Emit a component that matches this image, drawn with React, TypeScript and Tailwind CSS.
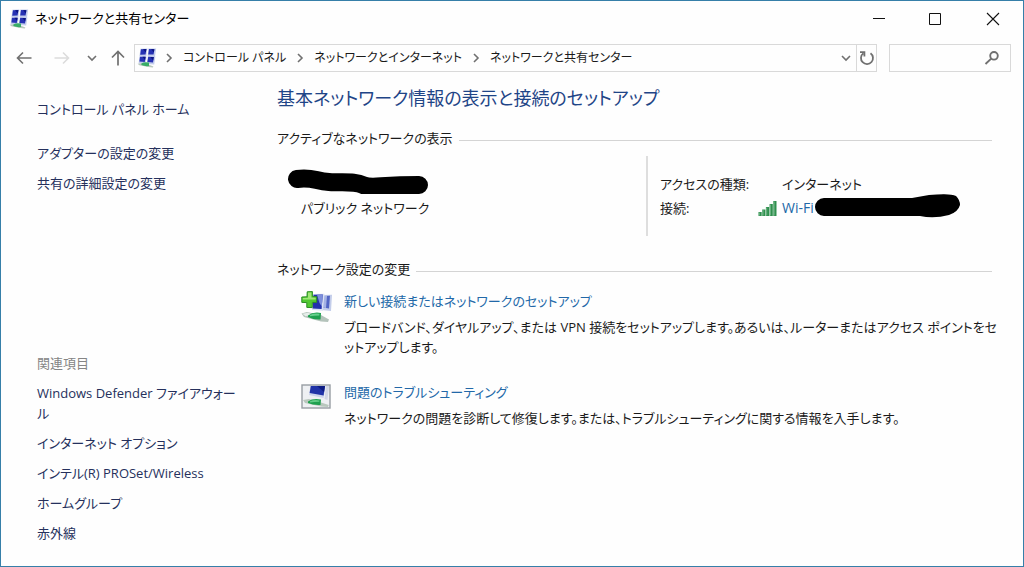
import type { ReactNode } from 'react'

const CRUMBS = ['コントロール パネル', 'ネットワークとインターネット', 'ネットワークと共有センター']

function NetworkIcon() {
  return (
    <svg className="h-5 w-5 shrink-0" viewBox="0 0 20 20" aria-hidden="true">
      <path d="M3.4 .8 10.4 .5 9.4 8 2.4 8.4Z M11.4 .6 19.2 .6 18 8.4 10.6 8.2Z M2.4 8.8 9.6 8.6 8.6 16 1.6 15.4Z M10.8 8.6 18.4 8.6 17.2 16.6 9.8 16Z" fill="#c3cdec" />
      <path d="M4 1.2 9.4 1 8.6 6.4 3.2 6.8Z M12 1 17.4 1.2 16.6 6.6 11.2 6.4Z M3 8.8 8.6 8.8 7.8 14 2.4 13.6Z M11.2 8.8 16.8 9 16 14.4 10.4 14Z" fill="#2632b4" />
      <path d="M6 1.2 9.4 1 8.8 4.4Z M14 1 17.4 1.2 16.8 4.6Z M5.4 8.8 8.6 8.8 8.1 12Z M13.4 9 16.8 9 16.2 12.4Z" fill="#0b1480" />
      <path d="M.6 15.8 5 15.2 12 16.8 16.4 18.4 15.8 19.6 11.4 19 2.4 17.2Z" fill="#b8c8bc" />
      <path d="M4.4 15.4Q7 13.6 12 14.4L12 18Q8 18.6 4.4 17Z" fill="#39ad67" />
    </svg>
  )
}

function NewConnectionIcon() {
  return (
    <svg className="h-8 w-8 shrink-0" viewBox="0 0 32 32" aria-hidden="true">
      <path d="M21 4 31 3.8 30 20 20 19Z" fill="#c3cdea" />
      <path d="M23 5 29 4.8 28 17.4 22 16.6Z" fill="#5366c4" />
      <path d="M23 5 26 4.9 25 17 22 16.6Z" fill="#a5b3e4" />
      <path d="M12 3 23.5 2.8 22 19.8 11 19Z" fill="#dbe2f4" />
      <path d="M12.5 3.8 21.8 3.6 20.6 18 11.6 17.4Z" fill="#2231ac" />
      <path d="M16 3.8 21.8 3.6 20.8 15.5 18.5 12Z" fill="#7d8fdb" />
      <path d="M.5 22.5 6 21 20 24 28 28.5 27 31 20 30.5 3 26Z" fill="#b4c3bb" />
      <path d="M1.5 22.8 7 21.8 11 23.6 4.5 25.2Z" fill="#e6eeea" />
      <path d="M7 24.5Q12 20.5 20 22L19.5 28.5Q13 29 7 26Z" fill="#1fa04f" />
      <path d="M9 24Q13 22 18.5 22.8L18.3 24.6Q13 24.8 9 25.2Z" fill="#66cf8c" />
      <path d="M6.2 .8 11.4 .6 11.4 5.6 15.8 5.8 15.6 11.4 11.4 11.4 11.2 16.6 5.8 16.4 5.8 11.6 .8 11.4 .8 6 6 5.8Z" fill="#51c832" stroke="#2b8c24" />
      <path d="M7 1.6 10.4 1.6 10.4 6.6 14.8 6.8 14.6 8.6 1.8 8.6 1.8 7 7 6.8Z" fill="#9fe676" />
    </svg>
  )
}

function TroubleshootIcon() {
  return (
    <svg className="h-8 w-8 shrink-0" viewBox="0 0 32 32" aria-hidden="true">
      <rect x="1" y="3" width="28" height="23" fill="#eef0f3" stroke="#989da3" strokeWidth="1.4" />
      <path d="M9.5 4 24.5 4 22.5 16 8 13Z" fill="#cbd3ec" />
      <path d="M9.8 4 24 4 22.6 13.6 8.6 11Z" fill="#2033a7" />
      <path d="M16 4 24 4 23 10Z" fill="#0d1c83" />
      <path d="M25 4 28 4 26.5 18 23.5 17Z" fill="#d3d8e6" />
      <path d="M2 18 8 17 20 20.5 27.8 23 27 25 20 24.4 4 21Z" fill="#b8c7bd" />
      <path d="M7 19.5Q12 16 20 17.6L19.5 23Q12 23.4 7 21Z" fill="#1fa04f" />
      <path d="M9 19.2Q13 17.4 18.5 18.4L18.3 19.8Q13 20 9 20.4Z" fill="#62cc87" />
    </svg>
  )
}

function SignalIcon() {
  return (
    <svg className="h-4 w-5 shrink-0" viewBox="0 0 20 16" aria-hidden="true">
      <path d="M.5 12h3.2v4H.5z M4.2 9.5h3.2V16H4.2z M7.9 7h3.2v9H7.9z M11.6 4h3.2v12h-3.2z M15.3 1h3.2v15h-3.2z" fill="#2f8f4e" />
      <path d="M1.3 12.5v3 M5 10v5.5 M8.7 7.5v8 M12.4 4.5v11 M16.1 1.5v14" stroke="#8cc79d" strokeWidth="0.7" />
    </svg>
  )
}

function Chevron({ down = false }: { down?: boolean }) {
  return (
    <svg className="h-3 w-3 shrink-0" viewBox="0 0 12 12" fill="none" stroke="#707070" strokeWidth="1.6" aria-hidden="true">
      <path d={down ? 'M2 4l4 4 4-4' : 'M4 2l4 4-4 4'} />
    </svg>
  )
}

function TitleBar() {
  return (
    <header className="flex h-9 items-center pl-2">
      <NetworkIcon />
      <h1 className="ml-1.5 flex-1 text-[13px] text-black">ネットワークと共有センター</h1>
      <button aria-label="最小化" className="flex h-9 w-14 items-center justify-center">
        <svg className="h-3.5 w-3.5" viewBox="0 0 14 14" stroke="#111"><path d="M1 6.5h12" /></svg>
      </button>
      <button aria-label="最大化" className="flex h-9 w-14 items-center justify-center">
        <svg className="h-3.5 w-3.5" viewBox="0 0 14 14" fill="none" stroke="#111"><path d="M1.5 1.5h11v11h-11z" /></svg>
      </button>
      <button aria-label="閉じる" className="flex h-9 w-[60px] items-center justify-center">
        <svg className="h-3.5 w-3.5" viewBox="0 0 14 14" stroke="#111" strokeWidth="1.1"><path d="M1 1l12 12M13 1L1 13" /></svg>
      </button>
    </header>
  )
}

function AddressBar() {
  return (
    <div className="flex items-center pt-[7px] pr-3 pl-[15px]">
      <button aria-label="戻る">
        <svg className="h-4 w-4" viewBox="0 0 16 16" fill="none" stroke="#707070" strokeWidth="1.6"><path d="M15.5 8H1.5M7 2.5L1.5 8 7 13.5" /></svg>
      </button>
      <button aria-label="進む" className="ml-[22px]" disabled>
        <svg className="h-4 w-4" viewBox="0 0 16 16" fill="none" stroke="#dcdcdc" strokeWidth="1.6"><path d="M.5 8h14M9 2.5L14.5 8 9 13.5" /></svg>
      </button>
      <button aria-label="最近表示した場所" className="ml-4"><Chevron down /></button>
      <button aria-label="上へ" className="ml-3">
        <svg className="h-4 w-4" viewBox="0 0 16 16" fill="none" stroke="#707070" strokeWidth="1.7"><path d="M8 15.5V1.5M2 7.5L8 1.5l6 6" /></svg>
      </button>
      <nav aria-label="アドレス" className="ml-2 flex h-7 min-w-0 flex-1 items-center border border-[#d9d9d9] pl-0.5">
        <NetworkIcon />
        <ol className="flex flex-1 items-center">
          {CRUMBS.map(c => (
            <li key={c} className="flex items-center">
              <span className="mx-1.5 flex"><Chevron /></span>
              <a href="#" className="px-0.5 text-xs whitespace-nowrap text-[#1a1a1a]">{c}</a>
            </li>
          ))}
        </ol>
        <button aria-label="以前の場所" className="px-1"><Chevron down /></button>
        <button aria-label="最新の情報に更新" className="flex h-full w-5 items-center justify-center border-l border-[#d9d9d9]">
          <svg className="h-4 w-4" viewBox="0 0 16 16" fill="none" stroke="#707070" strokeWidth="1.8"><path d="M11.5 3.2A6 6 0 1 1 4.2 3.4M1 2.2h4.4v4.4" /></svg>
        </button>
      </nav>
      <div className="ml-3 flex h-7 w-[122px] items-center border border-[#d9d9d9] pr-2.5">
        <input type="search" aria-label="検索" className="h-full min-w-0 flex-1 bg-transparent px-2 text-[13px] outline-none" />
        <svg className="h-4 w-4 shrink-0" viewBox="0 0 16 16" fill="none" stroke="#707070" strokeWidth="1.9" aria-hidden="true">
          <circle cx="10" cy="5.8" r="3.8" /><path d="M7.2 8.6L1.5 14" />
        </svg>
      </div>
    </div>
  )
}

function Sidebar() {
  return (
    <aside className="w-[240px] shrink-0 pt-[27px] pl-9 text-[13px] leading-5 text-[#25305c]">
      <a href="#" className="block">コントロール パネル ホーム</a>
      <ul className="mt-6 space-y-2.5">
        <li><a href="#">アダプターの設定の変更</a></li>
        <li><a href="#">共有の詳細設定の変更</a></li>
      </ul>
      <h2 className="mt-40 text-[#858585]">関連項目</h2>
      <ul className="mt-2.5 space-y-2.5 whitespace-nowrap">
        <li><a href="#">Windows Defender ファイアウォー<br />ル</a></li>
        <li><a href="#">インターネット オプション</a></li>
        <li><a href="#">インテル(R) PROSet/Wireless</a></li>
        <li><a href="#">ホームグループ</a></li>
        <li><a href="#">赤外線</a></li>
      </ul>
    </aside>
  )
}

function SectionTitle({ children }: { children: ReactNode }) {
  return (
    <div className="flex items-center gap-1.5">
      <h3>{children}</h3>
      <span className="mt-1 h-px flex-1 bg-[#d4d4d4]" />
    </div>
  )
}

function Task({ icon, title, children }: { icon: ReactNode; title: string; children: ReactNode }) {
  return (
    <li className="flex gap-[11px]">
      {icon}
      <div className="min-w-0 flex-1">
        <a href="#" className="block text-[#2268a8]">{title}</a>
        <p className="mt-1.5 whitespace-nowrap">{children}</p>
      </div>
    </li>
  )
}

function ActiveNetwork() {
  return (
    <div className="mt-2 flex h-20">
      <div className="flex-1 pt-3 pl-[10px]">
        <svg className="h-[26px] w-[142px]" viewBox="0 0 142 26" role="img" aria-label="ネットワーク名">
          <path d="M10 11C26 9 28 13 42 14S68 13 76 17 90 17 132 17" fill="none" stroke="#000" strokeWidth="18" strokeLinecap="round" strokeLinejoin="round" />
        </svg>
        <p className="mt-1 pl-3.5">パブリック ネットワーク</p>
      </div>
      <div className="w-[346px] border-l-2 border-[#dedede] pt-[18px] pl-3">
        <dl className="grid grid-cols-[122px_1fr] gap-y-1">
          <dt>アクセスの種類:</dt>
          <dd>インターネット</dd>
          <dt>接続:</dt>
          <dd className="relative -ml-6 flex items-center gap-1">
            <SignalIcon />
            <a href="#" className="text-sm leading-5 text-[#2268a8]">Wi-Fi</a>
            <svg className="absolute -top-1.5 left-14 h-7 w-[150px]" viewBox="0 0 150 28" aria-hidden="true">
              <path d="M10 15H108Q122 11 136 12" fill="none" stroke="#000" strokeWidth="18" strokeLinecap="round" />
              <path d="M98 6 115 3Q136 1 142 4 146 8 146 13 144 20 135 23 120 27 106 24Z" />
            </svg>
          </dd>
        </dl>
      </div>
    </div>
  )
}

export default function App() {
  return (
    <div lang="ja" className="flex min-h-screen flex-col border border-[#367fa9] bg-[#fefefe] font-['Open_Sans','Noto_Sans_CJK_JP',sans-serif] [font-feature-settings:'palt']">
      <TitleBar />
      <AddressBar />
      <div className="flex flex-1">
        <Sidebar />
        <main className="min-w-0 flex-1 pt-3 pr-[31px] pl-9 text-[13px] leading-5 text-[#1a1a1a]">
          <h2 className="text-lg leading-7 text-[#1f4587]">基本ネットワーク情報の表示と接続のセットアップ</h2>
          <section className="mt-4">
            <SectionTitle>アクティブなネットワークの表示</SectionTitle>
            <ActiveNetwork />
          </section>
          <section className="mt-[23px]">
            <SectionTitle>ネットワーク設定の変更</SectionTitle>
            <ul className="mt-3 space-y-[25px] pl-6">
              <Task icon={<NewConnectionIcon />} title="新しい接続またはネットワークのセットアップ">
                ブロードバンド、ダイヤルアップ、または VPN 接続をセットアップします。あるいは、ルーターまたはアクセス ポイントをセ<br />ットアップします。
              </Task>
              <Task icon={<TroubleshootIcon />} title="問題のトラブルシューティング">
                ネットワークの問題を診断して修復します。または、トラブルシューティングに関する情報を入手します。
              </Task>
            </ul>
          </section>
        </main>
      </div>
    </div>
  )
}
